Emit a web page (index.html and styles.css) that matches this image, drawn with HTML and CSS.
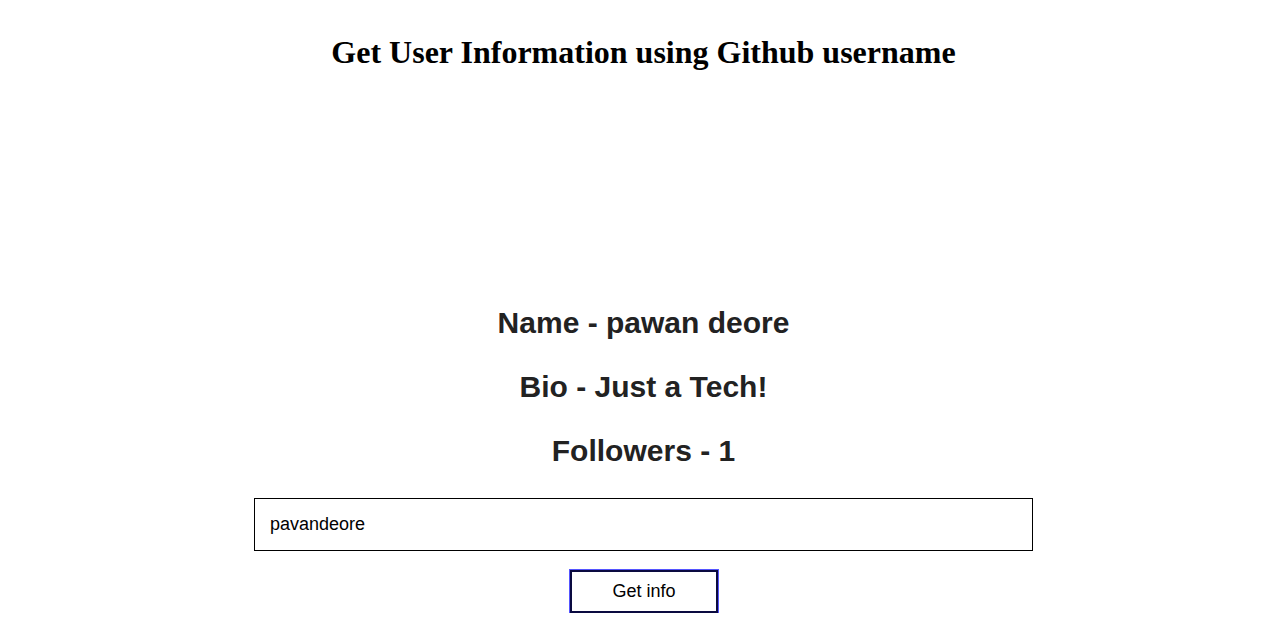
FILE: index.html
```html
<!DOCTYPE html>
<html>
<head>
<meta charset="utf-8">
<title>Github User Info</title>
<link rel="stylesheet" href="styles.css">
</head>
<body>
<main class="page">
  <h1 class="title">Get User Information using Github username</h1>
  <div class="avatar"></div>
  <section class="info">
    <h2 class="info-line">Name - pawan deore</h2>
    <h2 class="info-line">Bio - Just a Tech!</h2>
    <h2 class="info-line">Followers - 1</h2>
  </section>
  <input class="username" type="text" value="pavandeore">
  <button class="get-btn" type="button">Get info</button>
</main>
</body>
</html>
```
FILE: styles.css
```css
html, body {
  margin: 0;
  padding: 0;
  background: #ffffff;
}

.page {
  display: flex;
  flex-direction: column;
  align-items: center;
}

.title {
  margin: 34px 0 0;
  font-family: "Liberation Serif", "Times New Roman", serif;
  font-size: 32px;
  line-height: 37px;
  font-weight: bold;
  color: #000;
}

.avatar {
  height: 236px;
  width: 1px;
}

.info {
  display: flex;
  flex-direction: column;
  align-items: center;
  gap: 32px;
}

.info-line {
  margin: 0;
  font-family: "Liberation Sans", Arial, sans-serif;
  font-size: 30px;
  line-height: 32px;
  font-weight: bold;
  color: #222222;
}

.username {
  margin-top: 31px;
  box-sizing: border-box;
  width: 779px;
  height: 53px;
  padding: 0 15px;
  border: 1px solid #000;
  border-radius: 0;
  font-family: "Liberation Sans", Arial, sans-serif;
  font-size: 18px;
  color: #000;
  background: #fff;
  outline: none;
}

.get-btn {
  margin-top: 19px;
  margin-left: 1px;
  box-sizing: border-box;
  width: 148px;
  height: 43px;
  border: 2px solid #0a0a40;
  border-radius: 0;
  background: #fff;
  outline: 1px solid #5555ff;
  outline-offset: 0;
  font-family: "Liberation Sans", Arial, sans-serif;
  font-size: 18px;
  color: #000;
  cursor: pointer;
}
```
